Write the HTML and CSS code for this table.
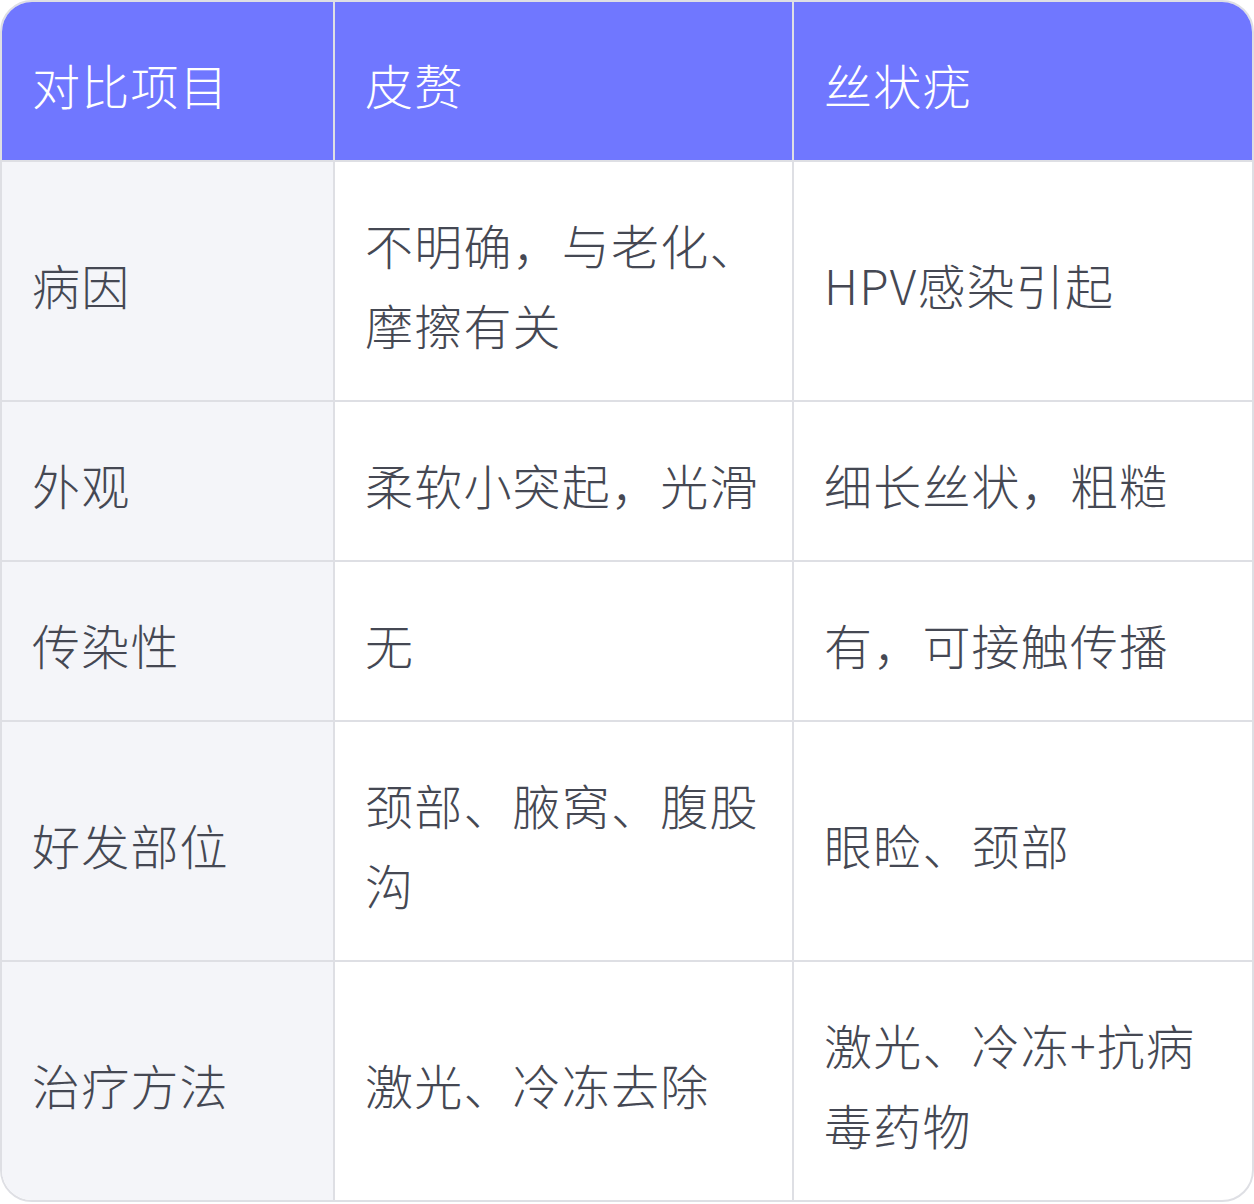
FILE: index.html
```html
<!DOCTYPE html>
<html lang="zh-CN">
<head>
<meta charset="utf-8">
<title>皮赘与丝状疣对比</title>
<link rel="stylesheet" href="styles.css">
</head>
<body>
<div class="wrap">
  <table class="cmp">
    <colgroup>
      <col class="c1">
      <col class="c2">
      <col class="c3">
    </colgroup>
    <thead>
      <tr>
        <th>对比项目</th>
        <th>皮赘</th>
        <th>丝状疣</th>
      </tr>
    </thead>
    <tbody>
      <tr>
        <td>病因</td>
        <td>不明确，与老化、摩擦有关</td>
        <td>HPV感染引起</td>
      </tr>
      <tr>
        <td>外观</td>
        <td>柔软小突起，光滑</td>
        <td>细长丝状，粗糙</td>
      </tr>
      <tr>
        <td>传染性</td>
        <td>无</td>
        <td>有，可接触传播</td>
      </tr>
      <tr>
        <td>好发部位</td>
        <td>颈部、腋窝、腹股沟</td>
        <td>眼睑、颈部</td>
      </tr>
      <tr>
        <td>治疗方法</td>
        <td>激光、冷冻去除</td>
        <td>激光、冷冻+抗病毒药物</td>
      </tr>
    </tbody>
  </table>
</div>
</body>
</html>
```
FILE: styles.css
```css
html, body {
  margin: 0;
  padding: 0;
  background: #ffffff;
}

.wrap {
  width: 1254px;
  box-sizing: border-box;
  border: 2px solid #dedfe4;
  border-radius: 32px;
  overflow: hidden;
}

.cmp {
  width: 1250px;
  border-collapse: separate;
  border-spacing: 0;
  table-layout: fixed;
  font-family: "Noto Sans CJK SC", "Noto Sans", sans-serif;
  font-weight: 300;
  font-size: 48px;
  line-height: 80px;
  letter-spacing: 1.2px;
  color: #454853;
}

.c1 { width: 333px; }
.c2 { width: 459px; }
.c3 { width: 458px; }

.cmp th,
.cmp td {
  padding: 42px 28px 36px 30px;
  text-align: left;
  vertical-align: middle;
  border-right: 2px solid #dedfe4;
  border-bottom: 2px solid #dedfe4;
  box-sizing: border-box;
}

.cmp th:last-child,
.cmp td:last-child {
  border-right: none;
}

.cmp tbody tr:last-child td {
  border-bottom: none;
}

.cmp th {
  background: #7077ff;
  color: #ffffff;
  font-weight: 300;
}

.cmp td:first-child {
  background: #f4f5f9;
}
```
